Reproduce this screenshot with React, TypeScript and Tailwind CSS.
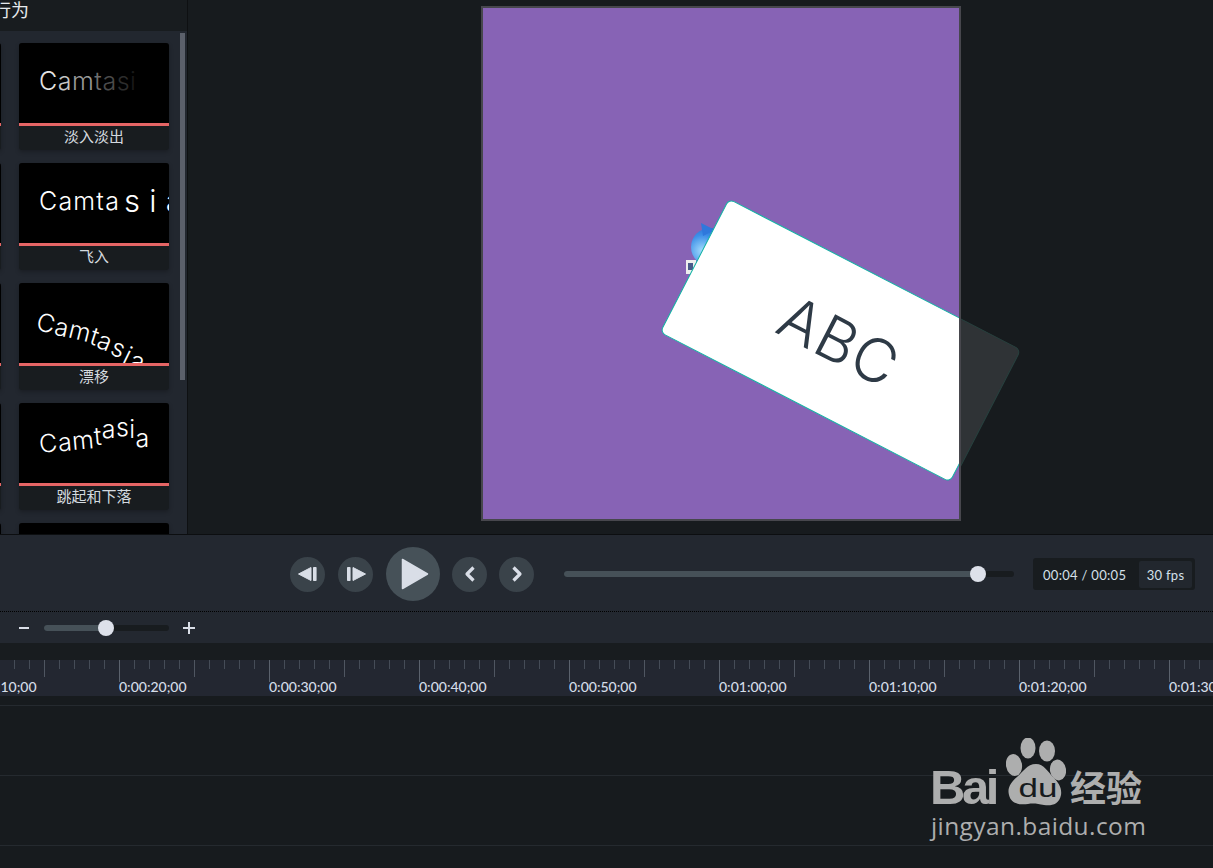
const thumbFont = "font-['Inter','Noto_Sans',sans-serif] font-light";

const fadeLetters = [
  { ch: 'C', cls: 'text-[#e4e4e4]' },
  { ch: 'a', cls: 'text-[#c4c4c4]' },
  { ch: 'm', cls: 'text-[#9a9a9a]' },
  { ch: 't', cls: 'text-[#6e6e6e]' },
  { ch: 'a', cls: 'text-[#4a4a4a]' },
  { ch: 's', cls: 'text-[#2c2c2c]' },
  { ch: 'i', cls: 'text-[#1a1a1a]' },
];

const driftLetters = [
  { ch: 'C', cls: 'rotate-[14deg] translate-y-[0px]' },
  { ch: 'a', cls: 'rotate-[12deg] translate-y-[4px]' },
  { ch: 'm', cls: 'rotate-[14deg] translate-y-[8px]' },
  { ch: 't', cls: 'rotate-[18deg] translate-y-[13px]' },
  { ch: 'a', cls: 'rotate-[22deg] translate-y-[18px]' },
  { ch: 's', cls: 'rotate-[24deg] translate-y-[25px]' },
  { ch: 'i', cls: 'rotate-[26deg] translate-y-[32px]' },
  { ch: 'a', cls: 'rotate-[14deg] translate-y-[38px]' },
];

const hopLetters = [
  { ch: 'C', cls: 'rotate-[-6deg] translate-y-[0px]' },
  { ch: 'a', cls: 'rotate-[-5deg] translate-y-[-1px]' },
  { ch: 'm', cls: 'rotate-[-5deg] translate-y-[-3px]' },
  { ch: 't', cls: 'rotate-[-5deg] translate-y-[-7px]' },
  { ch: 'a', cls: 'translate-y-[-14px]' },
  { ch: 's', cls: 'translate-y-[-16px]' },
  { ch: 'i', cls: 'translate-y-[-14px]' },
  { ch: 'a', cls: 'translate-y-[-5px]' },
];

function Thumb({ kind }: { kind: string }) {
  if (kind === 'fade') {
    return (
      <div className="pl-[20px] pt-[22px] text-[25px] leading-[32px] tracking-[0.5px] whitespace-nowrap">
        {fadeLetters.map((l, i) => (
          <span key={i} className={l.cls}>{l.ch}</span>
        ))}
      </div>
    );
  }
  if (kind === 'fly') {
    return (
      <div className="pl-[20px] pt-[22px] text-[25px] leading-[32px] tracking-[1.2px] text-white whitespace-nowrap flex items-center">
        <span>Camta</span>
        <span className="ml-[4px] text-[31px]">s</span>
        <span className="ml-[8px] text-[31px]">i</span>
        <span className="ml-[8px] text-[31px]">a</span>
      </div>
    );
  }
  if (kind === 'drift') {
    return (
      <div className="pl-[18px] pt-[24px] text-[25px] leading-[32px] whitespace-nowrap text-white">
        {driftLetters.map((l, i) => (
          <span key={i} className={`inline-block ${l.cls}`}>{l.ch}</span>
        ))}
      </div>
    );
  }
  if (kind === 'hop') {
    return (
      <div className="pl-[20px] pt-[24px] text-[25px] leading-[32px] tracking-[0.4px] text-white whitespace-nowrap">
        {hopLetters.map((l, i) => (
          <span key={i} className={`inline-block ${l.cls}`}>{l.ch}</span>
        ))}
      </div>
    );
  }
  return null;
}

function BehaviorCard({ kind, label }: { kind: string; label: string }) {
  return (
    <div className="w-[150px] h-[107px] rounded-[3px] overflow-hidden bg-[#181c1f] shadow-[0_2px_4px_rgba(0,0,0,0.25)] shrink-0">
      <div className={`h-[80px] bg-black overflow-hidden ${thumbFont}`}>
        <Thumb kind={kind} />
      </div>
      <div className="h-[3px] bg-[#e56565]" />
      <div className="h-[24px] text-center text-[15px] leading-[20px] text-[#d4dadf] font-['Noto_Sans_CJK_SC','Noto_Sans',sans-serif]">
        {label}
      </div>
    </div>
  );
}

function RoundButton({ children }: { children: React.ReactNode }) {
  return (
    <div className="w-[35px] h-[35px] rounded-full bg-[#3a434a] flex items-center justify-center">{children}</div>
  );
}

const rows = [
  { kind: 'fade', label: '淡入淡出' },
  { kind: 'fly', label: '飞入' },
  { kind: 'drift', label: '漂移' },
  { kind: 'hop', label: '跳起和下落' },
  { kind: 'none', label: '' },
];

const rulerLabels = [
  '0:00:10;00',
  '0:00:20;00',
  '0:00:30;00',
  '0:00:40;00',
  '0:00:50;00',
  '0:01:00;00',
  '0:01:10;00',
  '0:01:20;00',
  '0:01:30;00',
];

export default function App() {
  const ticks = Array.from({ length: 82 }, (_, i) => i);

  return (
    <div className="relative w-[1213px] h-[868px] overflow-hidden bg-[#171b1e] flex flex-col font-['Lato','Noto_Sans',sans-serif]">
      {/* Top: behaviors panel + preview */}
      <div className="flex h-[534px] shrink-0">
        <div className="w-[187px] shrink-0 flex flex-col bg-[#181c1f]">
          <div className="h-[31px] shrink-0 overflow-hidden">
            <div className="ml-[-7px] mt-[-3px] text-[18px] leading-[24px] text-[#e6e9ec] font-['Noto_Sans_CJK_SC',sans-serif]">
              行为
            </div>
          </div>
          <div className="flex-1 bg-[#22272f] overflow-hidden flex pt-[2px]">
            <div className="flex-1 overflow-hidden pt-[10px]">
              <div className="ml-[-149px] flex flex-col gap-[13px]">
                {rows.map((r, i) => (
                  <div key={i} className="flex gap-[18px]">
                    <BehaviorCard kind="none" label="" />
                    <BehaviorCard kind={r.kind} label={r.label} />
                  </div>
                ))}
              </div>
            </div>
            <div className="w-[7px] shrink-0">
              <div className="w-[5px] h-[347px] bg-[#5b606b]" />
            </div>
          </div>
        </div>
        <div className="w-px bg-[#0e1012] shrink-0" />

        {/* Preview stage */}
        <div className="relative flex-1 bg-[#171b1e] pl-[293px] pt-[6px] overflow-hidden">
          {/* part of the callout that lies outside the canvas */}
          <div className="absolute left-[489px] top-[266px] w-[328px] h-[151px] rotate-[27.3deg] rounded-[6px] bg-[#2f3336] border border-[#27403e]" />
          <div className="relative w-[480px] h-[515px] border-2 border-[#47474d] bg-[#8763b5] overflow-hidden">
            <svg className="absolute left-[203px] top-[214px]" width="36" height="56" viewBox="0 0 36 56">
              <defs>
                <radialGradient id="ball" cx="0.3" cy="0.6" r="0.75">
                  <stop offset="0" stopColor="#a4dcfd" />
                  <stop offset="0.55" stopColor="#3d8fe8" />
                  <stop offset="1" stopColor="#2a62c4" />
                </radialGradient>
              </defs>
              <circle cx="24" cy="25" r="19" fill="url(#ball)" />
              <path d="M15 1l14 7-12 6z" fill="#2f78dc" />
              <rect x="0" y="38" width="10" height="14" fill="#eeeeee" />
              <rect x="2" y="41" width="5" height="7" fill="#4a5a8a" />
            </svg>
            <div className="absolute left-[193px] top-[257px] w-[327px] h-[151px] rotate-[27.3deg] rounded-[6px] bg-white border border-[#12b3a4] flex items-center justify-center">
              <span className="text-[60px] leading-none font-light tracking-[1px] text-[#2e3a46] font-['Inter',sans-serif]">ABC</span>
            </div>
          </div>
        </div>
      </div>

      {/* Playback bar */}
      <div className="h-[77px] shrink-0 bg-[#232830] border-t border-[#0c0e10] flex items-center pt-[2px]">
        <div className="ml-[290px] flex items-center">
          <RoundButton>
            <svg width="22" height="16" viewBox="0 0 22 16" fill="#d9dee7">
              <path d="M14 1.5v13L1.5 8z" stroke="#d9dee7" strokeLinejoin="round" />
              <rect x="16" y="1" width="3.6" height="14" rx="0.8" />
            </svg>
          </RoundButton>
          <div className="ml-[13px]">
            <RoundButton>
              <svg width="22" height="16" viewBox="0 0 22 16" fill="#d9dee7">
                <rect x="2" y="1" width="3.6" height="14" rx="0.8" />
                <path d="M8 1.5v13L20.5 8z" stroke="#d9dee7" strokeLinejoin="round" />
              </svg>
            </RoundButton>
          </div>
          <div className="ml-[13px] w-[54px] h-[54px] rounded-full bg-[#465158] flex items-center justify-center">
            <svg className="ml-[3px]" width="28" height="32" viewBox="0 0 28 32" fill="#d9dee7">
              <path d="M1.5 1.5v29L26.5 16z" stroke="#d9dee7" strokeWidth="1.5" strokeLinejoin="round" />
            </svg>
          </div>
          <div className="ml-[12px]">
            <RoundButton>
              <svg width="14" height="18" viewBox="0 0 14 18" fill="none" stroke="#d9dee7" strokeWidth="3.2" strokeLinejoin="round">
                <path d="M10.5 2.5L4 9l6.5 6.5" />
              </svg>
            </RoundButton>
          </div>
          <div className="ml-[12px]">
            <RoundButton>
              <svg width="14" height="18" viewBox="0 0 14 18" fill="none" stroke="#d9dee7" strokeWidth="3.2" strokeLinejoin="round">
                <path d="M3.5 2.5L10 9l-6.5 6.5" />
              </svg>
            </RoundButton>
          </div>
        </div>
        <div className="ml-[30px] relative w-[450px] h-[6px] rounded-full bg-[#181c1f]">
          <div className="h-full w-[414px] rounded-full bg-[#465158]" />
          <div className="absolute left-[406px] top-[-5px] w-[16px] h-[16px] rounded-full bg-[#dde1ea]" />
        </div>
        <div className="ml-[19px] w-[162px] h-[32px] rounded-[3px] bg-[#181c1f] flex items-center text-[13px] text-[#d5e0ea] tracking-[0.3px]">
          <span className="w-[106px] pl-[10px] pt-[3px] whitespace-nowrap">00:04 / 00:05</span>
          <span className="w-[53px] h-[27px] bg-[#22272e] rounded-[2px] text-center leading-[28px]">30 fps</span>
        </div>
      </div>

      {/* Zoom row */}
      <div className="h-[32px] shrink-0 bg-[#232830] border-t border-dotted border-black flex items-center">
        <span className="ml-[19px] w-[10px] h-[2px] bg-[#d9dee7]" />
        <div className="ml-[15px] relative w-[125px] h-[6px] rounded-full bg-[#181c1f]">
          <div className="h-full w-[62px] rounded-full bg-[#465158]" />
          <div className="absolute left-[54px] top-[-5px] w-[16px] h-[16px] rounded-full bg-[#dde1ea]" />
        </div>
        <svg className="ml-[14px]" width="12" height="12" viewBox="0 0 12 12" fill="#d9dee7">
          <rect x="0" y="5" width="12" height="2" />
          <rect x="5" y="0" width="2" height="12" />
        </svg>
      </div>

      <div className="h-[17px] shrink-0 bg-[#181c1f]" />

      {/* Ruler */}
      <div className="h-[36px] shrink-0 bg-[#232731] overflow-hidden">
        <div className="h-[22px] flex ml-[-1px]">
          {ticks.map((i) => {
            const n = (i + 2) % 10;
            const tick = n === 0 ? 'h-[22px] bg-[#5b626d]' : n === 5 ? 'h-[17px] bg-[#4f5661]' : 'h-[9px] bg-[#454c57]';
            return (
              <div key={i} className="w-[15px] shrink-0">
                <div className={`w-px ${tick}`} />
              </div>
            );
          })}
        </div>
        <div className="flex ml-[-31px] mt-[-3px]">
          {rulerLabels.map((t) => (
            <div key={t} className="w-[150px] shrink-0 text-[14px] leading-[16px] font-medium text-[#d5dde8] whitespace-nowrap">
              {t}
            </div>
          ))}
        </div>
      </div>

      {/* Tracks */}
      <div className="flex-1 flex flex-col pt-[9px]">
        <div className="h-[70px] shrink-0 border-t border-[#252a2f]" />
        <div className="h-[70px] shrink-0 border-t border-[#252a2f]" />
        <div className="flex-1 border-t border-[#252a2f]" />
      </div>

      {/* Baidu watermark */}
      <div className="absolute left-[928px] top-[738px] w-[224px] h-[104px] text-[#b6b6b6] opacity-95">
        <span className="absolute left-[2px] top-[23px] text-[49px] leading-[52px] font-bold tracking-[-3.5px] font-['Liberation_Sans',sans-serif]">Bai</span>
        <svg className="absolute left-[78px] top-0" width="60" height="70" viewBox="0 0 60 70" fill="#b6b6b6">
          <ellipse cx="8" cy="27" rx="8" ry="11" transform="rotate(-10 8 27)" />
          <ellipse cx="22" cy="10" rx="7.5" ry="10.5" />
          <ellipse cx="41" cy="13" rx="8" ry="10.5" />
          <ellipse cx="52" cy="32" rx="8" ry="10.5" transform="rotate(-10 52 32)" />
          <path d="M30 26c8 0 12 8 17 13 6 6 9 11 8 18-2 10-10 11-17 10-6-1-10-2-16-1-8 1-17 0-19-9-2-7 2-13 8-18 6-5 10-13 19-13z" />
        </svg>
        <span className="absolute left-[84px] top-[36px] w-[52px] text-center text-[#181c1f] text-[25px] leading-[28px] font-['Liberation_Sans',sans-serif] scale-x-[1.4]">du</span>
        <span className="absolute left-[142px] top-[25px] text-[36px] leading-[46px] font-bold font-['Noto_Sans_CJK_SC',sans-serif]">经验</span>
        <span className="absolute left-[3px] top-[71px] text-[24.5px] leading-[34px] tracking-[0.4px] font-['Open_Sans',sans-serif]">jingyan.baidu.com</span>
      </div>
    </div>
  );
}
